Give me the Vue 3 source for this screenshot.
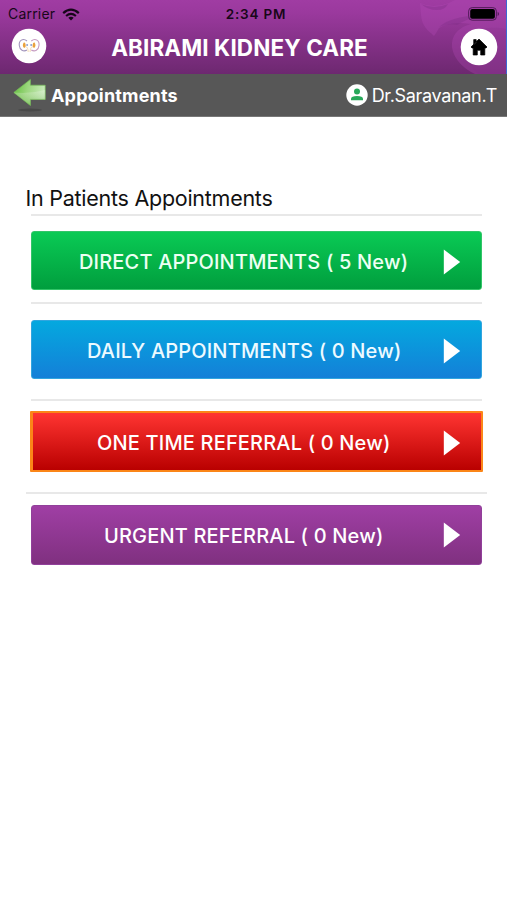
<script setup>
const items = [
  { key: 'direct', label: 'DIRECT APPOINTMENTS ( 5 New)' },
  { key: 'daily', label: 'DAILY APPOINTMENTS ( 0 New)' },
  { key: 'onetime', label: 'ONE TIME REFERRAL ( 0 New)' },
  { key: 'urgent', label: 'URGENT REFERRAL ( 0 New)' },
]
</script>

<template>
  <div class="screen">
    <header class="header">
      <svg class="swirl" viewBox="0 0 97 74" aria-hidden="true">
        <path d="M11 3Q24 9 40 3L46 0H97V74H66C53 68 42 56 43 43C44 33 51 27 62 24C50 22 38 23 30 28Q28 32 25 36C19 30 13 27 12 15Z" fill="#b54bbb" opacity=".3" />
        <path d="M12 4Q25 10 39 4Q36 10 28 10Q19 10 12 4ZM30 27C40 19 55 15 72 16Q57 19 48 25Q39 23 30 27Z" fill="#792d82" opacity=".32" />
        <path d="M97 29C78 25 60 30 57 45C55 56 60 66 69 74H97Z" fill="#792d82" opacity=".14" />
      </svg>
      <div class="status">
        <div class="network">
          <span class="carrier">Carrier</span>
          <svg class="wifi" viewBox="0 0 18 13" aria-hidden="true">
            <g fill="none" stroke="#160619" stroke-width="2.2">
              <path d="M1.2 5.1Q9-1.8 16.8 5.1" />
              <path d="M4.1 8Q9 3.9 13.9 8" />
            </g>
            <path d="M6.3 9.7Q9 7.7 11.7 9.7L9 12.6Z" fill="#160619" />
          </svg>
        </div>
        <span class="time">2:34 PM</span>
        <svg class="battery" viewBox="0 0 32 14" aria-hidden="true">
          <rect x=".6" y=".6" width="27.8" height="12.6" rx="3.6" fill="none" stroke="#541b5b" stroke-width="1" />
          <rect x="2.2" y="2.1" width="24.7" height="9.6" rx="2" fill="#000" />
          <path d="M29.7 4.8Q32.4 7 29.7 9.2Z" fill="#541b5b" />
        </svg>
      </div>
      <div class="titlebar">
        <svg class="logo" viewBox="0 0 36 36" aria-hidden="true">
          <circle cx="18" cy="18" r="17.3" fill="#fff" />
          <g fill="none" stroke-width="1.1">
            <path d="M16 13C12 9.5 7.6 12.6 8.3 17.5C8.7 22 12.5 24.2 16 22" stroke="#a295bd" />
            <path d="M20.3 13C24.3 9.5 28.7 12.6 28 17.5C27.6 22 23.8 24.2 20.3 22" stroke="#c59ac1" />
            <path d="M14.9 19Q17 19 17.2 24M21.5 19Q19.3 19 19.1 24" stroke="#f7dfba" />
          </g>
          <path d="M13 14.2Q10.6 17.2 13.1 20Q15.1 19.4 14.7 17.2Q14.7 14.8 13 14.2ZM23.3 14.2Q25.7 17.2 23.2 20Q21.2 19.4 21.6 17.2Q21.6 14.8 23.3 14.2Z" fill="#eaa13c" />
          <circle cx="16.1" cy="17" r="1" fill="#8a9fd2" />
          <circle cx="20.2" cy="17" r="1" fill="#8a9fd2" />
        </svg>
        <h1 class="title">ABIRAMI KIDNEY CARE</h1>
        <svg class="home" viewBox="0 0 38 38" aria-hidden="true">
          <circle cx="19" cy="19" r="18.3" fill="#fff" />
          <path d="M19 11L11 19L12 20H13.2V27H17.3V22.3H20.7V27H24.8V20H26L27 19ZM13.7 11.6H16.2V14.5L13.7 16.8Z" fill="#000" stroke="#000" stroke-width=".7" stroke-linejoin="round" />
        </svg>
      </div>
    </header>

    <nav class="subbar">
      <svg class="back" viewBox="0 0 34 36" aria-hidden="true">
        <defs>
          <linearGradient id="arrowFill" x1="0" y1="0" x2="1" y2=".2">
            <stop offset="0" stop-color="#5ebd38" />
            <stop offset=".48" stop-color="#9bd67d" />
            <stop offset="1" stop-color="#c6e9b8" />
          </linearGradient>
          <linearGradient id="arrowShade" x1="0" y1="0" x2="0" y2="1">
            <stop offset="0" stop-color="#fff" stop-opacity=".25" />
            <stop offset="1" stop-color="#54a82e" stop-opacity=".45" />
          </linearGradient>
        </defs>
        <ellipse cx="17" cy="32" rx="12" ry="1.5" fill="#484848" />
        <path d="M.8 14.5L17.4 1.4V7.2H32.2V21.4H17.4V27.5Z" fill="url(#arrowFill)" stroke="#76bd58" stroke-width=".7" />
        <path d="M.8 14.5Q18 16 32.2 12V21.4H17.4V27.5Z" fill="url(#arrowShade)" />
      </svg>
      <span class="page-name">Appointments</span>
      <svg class="avatar" viewBox="0 0 22 22" aria-hidden="true">
        <circle cx="11" cy="11" r="10.7" fill="#fff" />
        <circle cx="11" cy="7.6" r="3" fill="#28a85a" />
        <path d="M5 16.2V14.6Q5.2 12 11 12Q16.8 12 17 14.6V16.2Z" fill="#28a85a" />
      </svg>
      <span class="doctor">Dr.Saravanan.T</span>
    </nav>

    <main class="content">
      <h2 class="heading">In Patients Appointments</h2>
      <section v-for="item in items" :key="item.key" class="entry" :class="item.key">
        <div class="rule"></div>
        <button type="button" class="action">
          <span class="label">{{ item.label }}</span>
          <svg class="arrow" viewBox="0 0 18 26" aria-hidden="true">
            <path d="M.8.5L17.2 13L.8 25.5Z" fill="#fff" />
          </svg>
        </button>
      </section>
    </main>
  </div>
</template>

<style>
body { margin: 0; background: #fff; }
</style>

<style scoped>
* { box-sizing: border-box; }
.screen { width: 507px; height: 900px; overflow: hidden; background: #fff; font-family: Inter, "Liberation Sans", sans-serif; }
svg { display: block; flex: none; }
.header { position: relative; height: 74px; background: linear-gradient(#a03ca3 0, #9a399d 18%, #6d2870 100%); border-right: 1px solid #3c68d2; }
.swirl { position: absolute; right: 0; top: 0; width: 97px; height: 74px; }
.status { position: relative; height: 27px; display: grid; grid-template-columns: 1fr auto 1fr; align-items: center; padding: 0 6px 0 8px; color: #180719; }
.network { display: flex; align-items: center; gap: 7px; }
.carrier { font-size: 14px; line-height: 26px; letter-spacing: .2px; }
.wifi { width: 18px; height: 13px; }
.time { margin-left: 4px; font-size: 13.5px; line-height: 28px; font-weight: 600; letter-spacing: .8px; }
.battery { width: 32px; height: 14px; justify-self: end; }
.titlebar { position: relative; height: 47px; display: flex; align-items: flex-start; padding: 0 8px 0 11px; }
.logo { width: 36px; height: 36px; margin-top: 1px; }
.home { width: 38px; height: 38px; margin-top: 1px; }
.title { flex: 1; margin: 0; padding-right: 28px; text-align: center; color: #fff; font-size: 22.5px; line-height: 41px; font-weight: 700; letter-spacing: .1px; white-space: nowrap; }
.subbar { height: 43px; display: flex; align-items: center; padding: 0 10px 0 13px; background: #575757; border-bottom: 1px solid #777; color: #fff; }
.back { width: 34px; height: 36px; margin-top: 2px; }
.page-name { flex: 1; margin-left: 4px; font-size: 18px; font-weight: 700; line-height: 43px; letter-spacing: .17px; }
.avatar { width: 22px; height: 22px; margin-right: 4px; }
.doctor { padding-top: 2px; font-size: 18px; line-height: 42px; letter-spacing: -.32px; white-space: nowrap; }
.content { padding: 68px 20px 0 26px; }
.heading { margin: 0 0 0 -.5px; height: 29px; color: #111; font-size: 21.5px; line-height: 26px; font-weight: 400; letter-spacing: -.26px; white-space: nowrap; }
.entry { padding: 0 5px 0 5px; }
.rule { height: 2px; background: #e8e8e8; }
.action { position: relative; display: flex; align-items: center; width: 100%; height: 59px; margin: 15px 0 12px; padding: 0 20px 0 0; border: 1px solid transparent; border-radius: 3px; color: #fff; font: 500 20px/50px Inter, "Liberation Sans", sans-serif; letter-spacing: .17px; }
.label { flex: 1; padding-top: 3px; white-space: nowrap; text-align: left; }
.arrow { width: 18px; height: 26px; margin-top: 2px; }
.direct .action { padding-left: 47px; border-color: #32c568; background: linear-gradient(#0acb55, #009d3d) border-box; color: #edfff3; }
.daily .action { padding-left: 55px; margin: 16px 0 20px; border-color: #32a5df; background: linear-gradient(#04a9df, #147fd8) border-box; color: #edfaff; }
.onetime .action { width: 453px; height: 61px; margin: 10px 0 20px -1px; padding-left: 64px; padding-right: 20px; border: 2px solid #fb8618; border-left-width: 3px; border-radius: 1px; background: linear-gradient(#ff3532, #b90000) padding-box; }
.urgent { padding: 0; }
.urgent .action { width: 451px; height: 60px; margin: 11px 5px 0; padding-left: 72px; border-color: #91409a; background: linear-gradient(#a03fa5, #7f307f) border-box; }
.urgent .label { padding-top: 1px; }
.urgent .arrow { margin-top: 0; }
</style>
